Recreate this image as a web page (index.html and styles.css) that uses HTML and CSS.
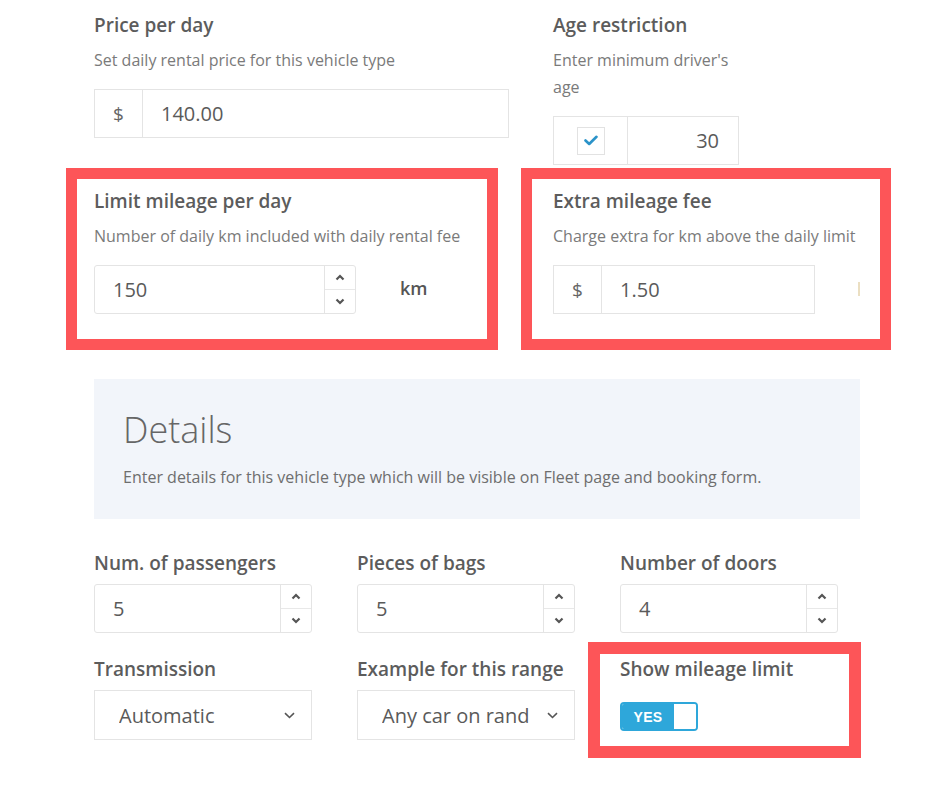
FILE: index.html
```html
<!DOCTYPE html>
<html lang="en">
<head>
<meta charset="utf-8">
<title>Vehicle type pricing</title>
<link rel="stylesheet" href="styles.css">
</head>
<body>
<div class="page">
  <div class="row row-top">
    <div class="field col-main">
      <div class="label">Price per day</div>
      <div class="desc">Set daily rental price for this vehicle type</div>
      <div class="igroup full">
        <span class="addon">$</span><span class="ival">140.00</span>
      </div>
    </div>
    <div class="field col-side narrow">
      <div class="label">Age restriction</div>
      <div class="desc">Enter minimum driver's age</div>
      <div class="igroup age">
        <span class="addon chk"><span class="cbox"><svg width="14" height="11" viewBox="0 0 14 11"><path d="M1.5 5.5 L5.2 9 L12.5 1.8" fill="none" stroke="#2b93c9" stroke-width="2.6" stroke-linecap="round" stroke-linejoin="round"/></svg></span></span><span class="ival right">30</span>
      </div>
    </div>
  </div>

  <div class="row row-mid">
    <div class="field col-main hl hl-a">
      <div class="label">Limit mileage per day</div>
      <div class="desc">Number of daily km included with daily rental fee</div>
      <div class="inline">
        <div class="spin mid">
          <span class="ival">150</span>
          <span class="arrows">
            <span class="arr"><svg width="10" height="7" viewBox="0 0 10 7"><path d="M1.5 5.5 L5 2 L8.5 5.5" fill="none" stroke="#555" stroke-width="2.2"/></svg></span>
            <span class="arr"><svg width="10" height="7" viewBox="0 0 10 7"><path d="M1.5 1.5 L5 5 L8.5 1.5" fill="none" stroke="#555" stroke-width="2.2"/></svg></span>
          </span>
        </div>
        <span class="unit">km</span>
      </div>
    </div>
    <div class="field col-side wide hl hl-b">
      <div class="label">Extra mileage fee</div>
      <div class="desc">Charge extra for km above the daily limit</div>
      <div class="inline">
        <div class="igroup mid">
          <span class="addon">$</span><span class="ival">1.50</span>
        </div>
        <span class="faint"></span>
      </div>
    </div>
  </div>

  <section class="details">
    <h2 class="details-title">Details</h2>
    <p class="details-desc">Enter details for this vehicle type which will be visible on Fleet page and booking form.</p>
  </section>

  <div class="grid">
    <div class="cell">
      <div class="label">Num. of passengers</div>
      <div class="spin">
        <span class="ival sm">5</span>
        <span class="arrows">
          <span class="arr"><svg width="10" height="7" viewBox="0 0 10 7"><path d="M1.5 5.5 L5 2 L8.5 5.5" fill="none" stroke="#555" stroke-width="2.2"/></svg></span>
          <span class="arr"><svg width="10" height="7" viewBox="0 0 10 7"><path d="M1.5 1.5 L5 5 L8.5 1.5" fill="none" stroke="#555" stroke-width="2.2"/></svg></span>
        </span>
      </div>
    </div>
    <div class="cell">
      <div class="label">Pieces of bags</div>
      <div class="spin">
        <span class="ival sm">5</span>
        <span class="arrows">
          <span class="arr"><svg width="10" height="7" viewBox="0 0 10 7"><path d="M1.5 5.5 L5 2 L8.5 5.5" fill="none" stroke="#555" stroke-width="2.2"/></svg></span>
          <span class="arr"><svg width="10" height="7" viewBox="0 0 10 7"><path d="M1.5 1.5 L5 5 L8.5 1.5" fill="none" stroke="#555" stroke-width="2.2"/></svg></span>
        </span>
      </div>
    </div>
    <div class="cell">
      <div class="label">Number of doors</div>
      <div class="spin">
        <span class="ival sm">4</span>
        <span class="arrows">
          <span class="arr"><svg width="10" height="7" viewBox="0 0 10 7"><path d="M1.5 5.5 L5 2 L8.5 5.5" fill="none" stroke="#555" stroke-width="2.2"/></svg></span>
          <span class="arr"><svg width="10" height="7" viewBox="0 0 10 7"><path d="M1.5 1.5 L5 5 L8.5 1.5" fill="none" stroke="#555" stroke-width="2.2"/></svg></span>
        </span>
      </div>
    </div>
    <div class="cell">
      <div class="label">Transmission</div>
      <div class="select">
        <span class="sval">Automatic</span>
        <svg class="chev" width="11" height="7" viewBox="0 0 11 7"><path d="M1 1.2 L5.5 5.5 L10 1.2" fill="none" stroke="#555" stroke-width="1.6"/></svg>
      </div>
    </div>
    <div class="cell">
      <div class="label">Example for this range</div>
      <div class="select">
        <span class="sval">Any car on rand</span>
        <svg class="chev" width="11" height="7" viewBox="0 0 11 7"><path d="M1 1.2 L5.5 5.5 L10 1.2" fill="none" stroke="#555" stroke-width="1.6"/></svg>
      </div>
    </div>
    <div class="cell hl hl-c">
      <div class="label">Show mileage limit</div>
      <div class="toggle">
        <span class="toggle-on">YES</span>
        <span class="toggle-knob"></span>
      </div>
    </div>
  </div>
</div>
</body>
</html>
```

FILE: styles.css
```css
*, *::before, *::after { box-sizing: border-box; }

html, body {
  margin: 0;
  background: #ffffff;
}

body {
  font-family: "Open Sans", "Liberation Sans", sans-serif;
  color: #5b5b5b;
}

.page {
  padding: 13px 0 0 94px;
  width: 940px;
  min-height: 788px;
}

.row {
  display: flex;
  gap: 44px;
  align-items: flex-start;
}

.row-mid {
  margin-top: 24px;
}

.col-main { width: 415px; flex: none; }
.col-side { flex: none; }
.col-side.narrow { width: 186px; }
.col-side.wide { width: 320px; }

.label {
  font-size: 19px;
  line-height: 24px;
  font-weight: 600;
  color: #5c5c5c;
}

.desc {
  font-size: 16px;
  line-height: 27px;
  color: #7a7a7a;
  margin: 10px 0 15px;
}

/* input groups */
.igroup {
  display: flex;
  height: 49px;
  border: 1px solid #e4e4e4;
  background: #fff;
}
.igroup.full { width: 415px; }
.igroup.mid { width: 262px; }
.igroup.age { width: 186px; }

.addon {
  width: 48px;
  flex: none;
  display: flex;
  align-items: center;
  justify-content: center;
  border-right: 1px solid #e4e4e4;
  font-size: 19px;
  color: #666;
}

.addon.chk { width: 74px; }

.cbox {
  width: 28px;
  height: 28px;
  border: 1px solid #e2e2e2;
  display: flex;
  align-items: center;
  justify-content: center;
}

.ival {
  flex: 1;
  display: flex;
  align-items: center;
  padding-left: 18px;
  font-size: 20px;
  color: #5a5a5a;
}

.ival.right {
  justify-content: flex-end;
  padding: 0 19px 0 0;
}

.ival.sm { padding-left: 18px; }

.inline {
  display: flex;
  align-items: center;
}

/* spinner input */
.spin {
  display: flex;
  height: 49px;
  border: 1px solid #e4e4e4;
  border-radius: 3px;
  background: #fff;
}
.spin.mid { width: 262px; }

.arrows {
  width: 31px;
  flex: none;
  display: flex;
  flex-direction: column;
  border-left: 1px solid #e4e4e4;
}

.arr {
  flex: 1;
  display: flex;
  align-items: center;
  justify-content: center;
}

.arr + .arr { border-top: 1px solid #e8e8e8; }

.unit {
  margin-left: 44px;
  font-size: 18px;
  font-weight: 600;
  color: #555;
  margin-top: -4px;
}

.faint {
  width: 2px;
  height: 14px;
  margin-left: 43px;
  margin-top: -2px;
  background: #ebdfc2;
}

/* details panel */
.details {
  margin-top: 65px;
  width: 766px;
  height: 140px;
  background: #f2f5fa;
  padding: 31px 29px 30px;
}

.details-title {
  margin: 0 0 15px;
  font-size: 36px;
  line-height: 40px;
  font-weight: 300;
  color: #666;
}

.details-desc {
  margin: 0;
  font-size: 16px;
  line-height: 24px;
  color: #6e6e6e;
}

/* grid */
.grid {
  margin-top: 32px;
  display: grid;
  grid-template-columns: repeat(3, 218px);
  column-gap: 45px;
  row-gap: 24px;
}

.cell .label { margin-bottom: 9px; }

.select {
  display: flex;
  align-items: center;
  height: 50px;
  border: 1px solid #e4e4e4;
  background: #fff;
  padding: 0 16px 0 24px;
}

.sval {
  flex: 1;
  font-size: 20px;
  color: #5a5a5a;
  white-space: nowrap;
  overflow: hidden;
}

.chev { flex: none; }

/* toggle */
.toggle {
  margin-top: 21px;
  width: 78px;
  height: 29px;
  display: flex;
  border: 2px solid #2ea7da;
  border-radius: 4px;
  overflow: hidden;
}

.toggle-on {
  flex: 1;
  background: #2ea7da;
  color: #fff;
  font-family: "Liberation Sans", Arial, sans-serif;
  font-weight: 700;
  font-size: 14px;
  display: flex;
  align-items: center;
  justify-content: center;
  letter-spacing: 0.3px;
}

.toggle-knob {
  width: 22px;
  flex: none;
  background: #fff;
}

/* red annotation frames drawn over fields */
.hl { position: relative; }

.hl::after {
  content: "";
  position: absolute;
  border: 11px solid #fd5558;
  pointer-events: none;
}

.hl-a::after {
  top: -21px;
  left: -28px;
  width: 432px;
  height: 182px;
}

.hl-b::after {
  top: -21px;
  left: -32px;
  width: 370px;
  height: 182px;
}

.hl-c::after {
  top: -15px;
  left: -32px;
  width: 273px;
  height: 116px;
  border-width: 12px;
}
```
